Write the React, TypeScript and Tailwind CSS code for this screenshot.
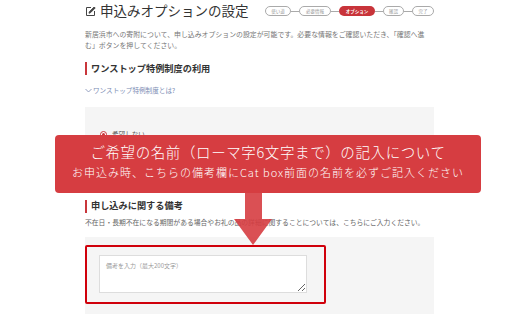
import React from "react";

const steps = [
  { label: "使い道", w: "w-[26px]" },
  { label: "必要情報", w: "w-[32px]" },
  { label: "オプション", w: "w-[36px]", active: true },
  { label: "確認", w: "w-[21px]" },
  { label: "完了", w: "w-[22px]" },
];

function EditIcon() {
  return (
    <svg width="11" height="11" viewBox="0 0 11 11" fill="none" stroke="#444" strokeWidth="1">
      <path d="M6 1.5H1.5v8h8V5" />
      <path d="M9.2 1 L10.2 2 L5.4 6.8 L4 7.2 L4.4 5.8 Z" fill="#444" />
    </svg>
  );
}

function Heading({ children }: { children: React.ReactNode }) {
  return (
    <div className="flex items-center h-[13px] border-l-[2px] border-[#c9363b] pl-[4px]">
      <span className="text-[9.2px] font-bold text-[#333] leading-none">{children}</span>
    </div>
  );
}

export default function App() {
  return (
    <div
      className="relative w-[520px] h-[323px] bg-white overflow-hidden"
      style={{ fontFamily: '"Noto Sans CJK JP", "Noto Sans", sans-serif' }}
    >
      <div className="ml-[85px] w-[349px] pt-[5px]">
        {/* title + steps */}
        <div className="flex items-center justify-between h-[12px]">
          <div className="flex items-center gap-[4px]">
            <EditIcon />
            <span className="text-[13.5px] text-[#333] leading-none">申込みオプションの設定</span>
          </div>
          <div className="flex items-center">
            {steps.map((s, i) => (
              <React.Fragment key={s.label}>
                {i > 0 && <div className="w-[8px] h-px bg-[#aaa]" />}
                <div
                  className={`${s.w} h-[10px] rounded-full flex items-center justify-center text-[4.5px] leading-none ${
                    s.active ? "bg-[#c8343a] text-white font-bold" : "border border-[#aaa] text-[#999]"
                  }`}
                >
                  {s.label}
                </div>
              </React.Fragment>
            ))}
          </div>
        </div>

        {/* description */}
        <p className="mt-[12px] text-[6.9px] leading-[11px] text-[#777] whitespace-nowrap">
          新居浜市への寄附について、申し込みオプションの設定が可能です。必要な情報をご確認いただき、「確認へ進
          <br />
          む」ボタンを押してください。
        </p>

        <div className="mt-[11px]">
          <Heading>ワンストップ特例制度の利用</Heading>
        </div>

        <div className="mt-[12px] flex items-center text-[6.6px] text-[#7b8bb3] leading-none">
          <svg width="7" height="5" viewBox="0 0 7 5" fill="none" stroke="#7b8bb3" strokeWidth="0.8">
            <path d="M0.5 1 L3.5 4 L6.5 1" />
          </svg>
          <span className="ml-[1px]">ワンストップ特例制度とは?</span>
        </div>

        {/* gray box 1 */}
        <div className="mt-[13px] bg-[#f5f5f5] h-[84px] pt-[24px] pl-[15px]">
          <div className="flex items-center gap-[5px]">
            <div className="w-[7px] h-[7px] rounded-full border border-[#c9363b] flex items-center justify-center bg-white">
              <div className="w-[3px] h-[3px] rounded-full bg-[#c9363b]" />
            </div>
            <span className="text-[6.6px] text-[#555] leading-none">希望しない</span>
          </div>
        </div>

        <div className="mt-[9px]">
          <Heading>申し込みに関する備考</Heading>
        </div>

        <p className="mt-[4px] text-[6.8px] leading-[10px] text-[#666] whitespace-nowrap">
          不在日・長期不在になる期間がある場合やお礼の品の詳細に関することについては、こちらにご入力ください。
        </p>

        {/* gray box 2 */}
        <div className="mt-[10px] bg-[#f5f5f5] h-[77px] pt-[8px]">
          <div className="w-[241px] h-[59px] border-[2px] border-[#d0000b] rounded-[2px] pl-[12px] pt-[8px]">
            <textarea
              className="block w-[208px] h-[38px] bg-white border border-[#ddd] text-[6px] px-[6px] py-[7px] resize text-[#333] placeholder:text-[#999] outline-none leading-none"
              placeholder="備考を入力（最大200文字）"
            />
          </div>
        </div>
      </div>

      {/* overlay banner */}
      <div className="absolute left-[55px] top-[135px] w-[426px] h-[58px] rounded-[4px] bg-[#d63d41] flex flex-col items-center text-white">
        <div className="mt-[8px] text-[14.5px] leading-[18px] tracking-[0.6px] font-light">
          ご希望の名前（ローマ字6文字まで）の記入について
        </div>
        <div className="mt-[4px] text-[11px] leading-[14px] tracking-[1px] font-light">
          お申込み時、こちらの備考欄にCat box前面の名前を必ずご記入ください
        </div>
      </div>

      {/* overlay arrow */}
      <svg className="absolute left-[232px] top-[193px]" width="42" height="53" viewBox="0 0 42 53">
        <path d="M13 0 H30 V26 H40 L21 52 L2 26 H13 Z" fill="#d63d41" fillOpacity="0.9" />
      </svg>
    </div>
  );
}
